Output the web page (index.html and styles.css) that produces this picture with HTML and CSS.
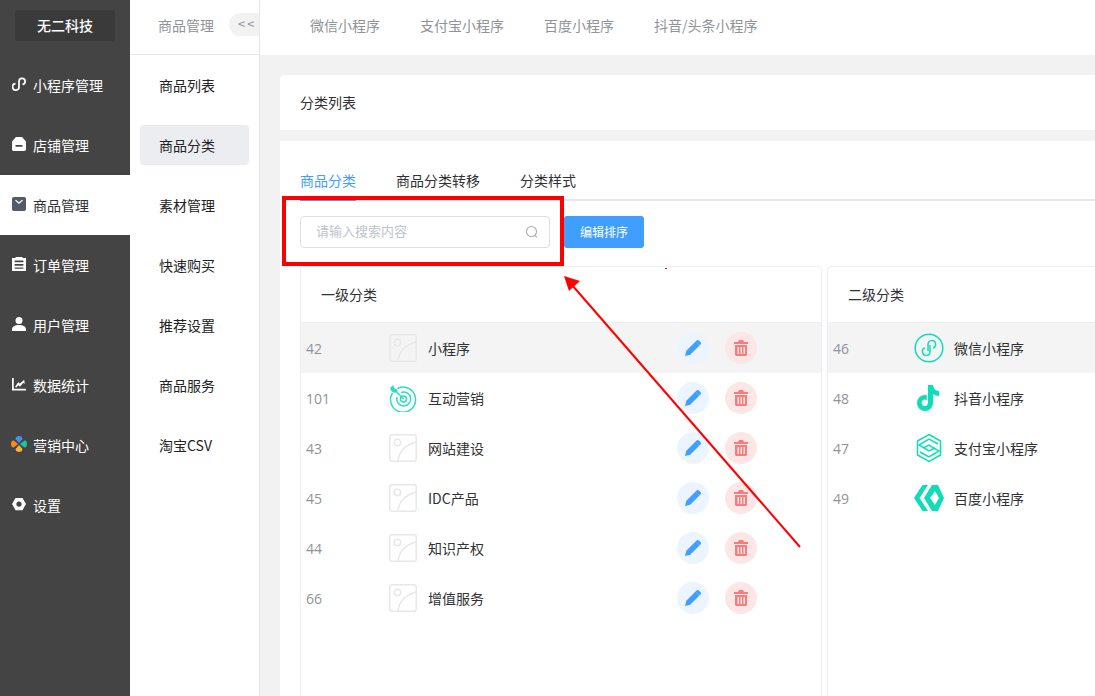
FILE: index.html
```html
<!DOCTYPE html>
<html lang="zh">
  <head>
    <meta charset="UTF-8" />
    <title>商品分类</title>
    <link rel="stylesheet" href="styles.css">
  </head>
  <body>
    <svg class="defs">
      <symbol id="img-empty" viewBox="0 0 28 28">
        <rect x="0.75" y="0.75" width="26.5" height="26.5" rx="2.5" fill="none" stroke="#e8e8e8" stroke-width="1.5"/>
        <circle cx="8.5" cy="8.5" r="3.2" fill="none" stroke="#e8e8e8" stroke-width="1.5"/>
        <path d="M9 27c1-9 7-16 18-19" fill="none" stroke="#e8e8e8" stroke-width="1.5"/>
      </symbol>
      <symbol id="i-pen" viewBox="0 0 16 16">
        <path d="M0 16l1.300-5.200L10.600 1.500l3.900 3.900-9.300 9.300zM11.600.5c.7-.7 1.600-.7 2.200-.1l1.800 1.800c.6.6.6 1.500-.1 2.200l-.9.9-3.900-3.900z" fill="#409eff"/>
      </symbol>
      <symbol id="i-bin" viewBox="0 0 14 16">
        <path d="M5 0h4l1 2h4v2H0V2h4zM1 5h12v9.500c0 .8-.7 1.500-1.500 1.500h-9C1.700 16 1 15.300 1 14.500zm2.500 2v7h1.500V7zm3 0v7h1.500V7zm3 0v7H11V7z" fill="#f87c7c" fill-rule="evenodd"/>
      </symbol>
    </svg>

    <div class="app">
      <aside class="side">
        <div class="logo">无二科技</div>
        <nav>
          <a class="side-item">
            <svg class="side-icon" viewBox="0 0 16 16"><path d="M8 11V5a3.500 3.500 0 1 1 4 3.500M8 11a3.700 3.700 0 1 1-4-3.500" fill="none" stroke="#fff" stroke-width="2"/></svg>
            小程序管理
          </a>
          <a class="side-item">
            <svg class="side-icon" viewBox="0 0 16 16"><path d="M4.500 0h7L16 5v9c0 1-.7 2-2 2H2c-1.300 0-2-1-2-2V5zM4 9v2h8V9z" fill="#fff" fill-rule="evenodd"/></svg>
            店铺管理
          </a>
          <a class="side-item active">
            <svg class="side-icon" viewBox="0 0 16 16"><path d="M2 0h12c1 0 2 1 2 2v12c0 1-1 2-2 2H2c-1 0-2-1-2-2V2c0-1 1-2 2-2zm1.500 4L8 8l4.500-4-1-1L8 6 4.500 3z" fill="#555b66" fill-rule="evenodd"/></svg>
            商品管理
          </a>
          <a class="side-item">
            <svg class="side-icon" viewBox="0 0 16 16"><path d="M0 1h4V0h8v1h4v15H0zm3 3v2h10V4zm0 4v2h10V8zm0 4v1.500h10V12z" fill="#fff" fill-rule="evenodd"/></svg>
            订单管理
          </a>
          <a class="side-item">
            <svg class="side-icon" viewBox="0 0 16 16"><circle cx="8" cy="4" r="4" fill="#fff"/><path d="M0 16v-2c0-3 3-5 8-5s8 2 8 5v2z" fill="#fff"/></svg>
            用户管理
          </a>
          <a class="side-item">
            <svg class="side-icon" viewBox="0 0 16 16"><path d="M0 1h2v12.500h14V15.500H0z" fill="#fff"/><path d="M3.500 11L7 6l2 1.500L14 3l.5 5-1.500-1.500L9 11 7 9.500 5 12z" fill="#fff"/></svg>
            数据统计
          </a>
          <a class="side-item">
            <svg class="side-icon big" viewBox="0 0 16 16"><path d="M8 7L4.700 3.200C4.300 2.500 4.800 0 8 0s3.700 2.500 3.300 3.200z" fill="#4a8df0"/><path d="M7 8l-4 3.300C2 11.800 0 11 0 8s2-3.800 3-3.300z" fill="#f5901e"/><path d="M9 8l4-3.300c1-.5 3 .3 3 3.300s-2 3.800-3 3.300z" fill="#12c9a5"/><path d="M8 9l3.300 3.800c.4.700-.1 3.200-3.300 3.200s-3.700-2.500-3.300-3.200z" fill="#fbb03b"/></svg>
            营销中心
          </a>
          <a class="side-item">
            <svg class="side-icon" viewBox="0 0 16 16"><path d="M4 1h8l4 7-4 7H4L0 8zm4 4a3 3 0 1 0 0 6 3 3 0 0 0 0-6z" fill="#fff" fill-rule="evenodd"/></svg>
            设置
          </a>
        </nav>
      </aside>

      <aside class="sub">
        <div class="sub-head">
          <span>商品管理</span>
          <span class="collapse">&lt;&lt;</span>
        </div>
        <a class="sub-item">商品列表</a>
        <a class="sub-item active">商品分类</a>
        <a class="sub-item">素材管理</a>
        <a class="sub-item">快速购买</a>
        <a class="sub-item">推荐设置</a>
        <a class="sub-item">商品服务</a>
        <a class="sub-item">淘宝CSV</a>
      </aside>

      <main class="main">
        <div class="topbar">
          <a>微信小程序</a>
          <a>支付宝小程序</a>
          <a>百度小程序</a>
          <a>抖音/头条小程序</a>
        </div>
        <div class="content">
          <div class="title-card">分类列表</div>
          <div class="body-card">
            <div class="tabs">
              <a class="tab active">商品分类</a>
              <a class="tab">商品分类转移</a>
              <a class="tab">分类样式</a>
            </div>
            <div class="tools">
              <div class="search">
                <span>请输入搜索内容</span>
                <svg viewBox="0 0 14 14" width="14" height="14"><circle cx="6.500" cy="6.500" r="5" fill="none" stroke="#a8abb2" stroke-width="1.100"/><path d="M10 10.500l1.800 1.800" stroke="#a8abb2" stroke-width="1.100"/></svg>
              </div>
              <button class="btn">编辑排序</button>
            </div>
            <div class="panels">
              <section class="panel first">
                <h4>一级分类</h4>
                <div class="row on">
                  <span class="num">42</span>
                  <svg class="pic"><use href="#img-empty"/></svg>
                  <span class="name">小程序</span>
                  <span class="ops">
                    <i class="op edit"><svg width="16" height="16"><use href="#i-pen"/></svg></i>
                    <i class="op del"><svg width="14" height="16"><use href="#i-bin"/></svg></i>
                  </span>
                </div>
                <div class="row">
                  <span class="num">101</span>
                  <svg class="pic" viewBox="0 0 28 28" fill="none" stroke="#2fdcc0">
                    <path d="M8.500 4.500A12.500 12.500 0 1 1 3.500 9" stroke-width="1.500"/>
                    <path d="M12 8.500A7 7 0 1 1 8 13" stroke-width="1.500"/>
                    <circle cx="14.500" cy="15" r="3" stroke-width="1.500"/>
                    <path d="M4 4l10.500 11" stroke-width="1.500"/>
                    <path d="M1 4l3-3 1.500 3.500L9 6 6 9 2.500 7.500z" fill="#2fdcc0" stroke="none"/>
                  </svg>
                  <span class="name">互动营销</span>
                  <span class="ops">
                    <i class="op edit"><svg width="16" height="16"><use href="#i-pen"/></svg></i>
                    <i class="op del"><svg width="14" height="16"><use href="#i-bin"/></svg></i>
                  </span>
                </div>
                <div class="row">
                  <span class="num">43</span>
                  <svg class="pic"><use href="#img-empty"/></svg>
                  <span class="name">网站建设</span>
                  <span class="ops">
                    <i class="op edit"><svg width="16" height="16"><use href="#i-pen"/></svg></i>
                    <i class="op del"><svg width="14" height="16"><use href="#i-bin"/></svg></i>
                  </span>
                </div>
                <div class="row">
                  <span class="num">45</span>
                  <svg class="pic"><use href="#img-empty"/></svg>
                  <span class="name">IDC产品</span>
                  <span class="ops">
                    <i class="op edit"><svg width="16" height="16"><use href="#i-pen"/></svg></i>
                    <i class="op del"><svg width="14" height="16"><use href="#i-bin"/></svg></i>
                  </span>
                </div>
                <div class="row">
                  <span class="num">44</span>
                  <svg class="pic"><use href="#img-empty"/></svg>
                  <span class="name">知识产权</span>
                  <span class="ops">
                    <i class="op edit"><svg width="16" height="16"><use href="#i-pen"/></svg></i>
                    <i class="op del"><svg width="14" height="16"><use href="#i-bin"/></svg></i>
                  </span>
                </div>
                <div class="row">
                  <span class="num">66</span>
                  <svg class="pic"><use href="#img-empty"/></svg>
                  <span class="name">增值服务</span>
                  <span class="ops">
                    <i class="op edit"><svg width="16" height="16"><use href="#i-pen"/></svg></i>
                    <i class="op del"><svg width="14" height="16"><use href="#i-bin"/></svg></i>
                  </span>
                </div>
              </section>

              <section class="panel second">
                <h4>二级分类</h4>
                <div class="row on">
                  <span class="num">46</span>
                  <svg class="pic big" viewBox="0 0 30 30" fill="none" stroke="#0fdcb8" stroke-width="1.500">
                    <circle cx="15" cy="15" r="13.800"/>
                    <path d="M14 18V11.500a3.800 3.800 0 1 1 5 3.500M16 12v6.500a3.800 3.800 0 1 1-5-3.500"/>
                  </svg>
                  <span class="name">微信小程序</span>
                </div>
                <div class="row">
                  <span class="num">48</span>
                  <svg class="pic big" viewBox="0 0 30 30">
                    <path d="M14 2h5c.3 3.500 2.600 5.700 6 6v5c-2.400 0-4.400-.7-6-1.900V20a8 8 0 1 1-8-8c.6 0 1.200.1 1.800.2v5.100a3.200 3.200 0 1 0 1.200 2.700z" fill="#0fdcb8"/>
                  </svg>
                  <span class="name">抖音小程序</span>
                </div>
                <div class="row">
                  <span class="num">47</span>
                  <svg class="pic big" viewBox="0 0 30 30" fill="none" stroke="#0fdcb8" stroke-width="1.500">
                    <path d="M15 1.500l11.500 6.500v14L15 28.500 3.500 22V8z"/>
                    <path d="M24 11L15 6 5 12l10 6 6-3M6 19l9 5 10-6-10-6-6 3"/>
                  </svg>
                  <span class="name">支付宝小程序</span>
                </div>
                <div class="row">
                  <span class="num">49</span>
                  <svg class="pic big" viewBox="0 0 30 30">
                    <path d="M8.500 2H14L5.500 15 14 28H8.500L0 15z" fill="#0fdcb8"/>
                    <path d="M18 2h6l6 13-6 13h-6L10 15zm3 6l-5 7 5 7 4-7z" fill="#0fdcb8" fill-rule="evenodd"/>
                  </svg>
                  <span class="name">百度小程序</span>
                </div>
              </section>
            </div>
          </div>
        </div>
      </main>
    </div>

    <!-- 标注：红框和箭头 -->
    <div class="mark-box"></div>
    <svg class="mark-arrow" width="1095" height="696" viewBox="0 0 1095 696">
      <path d="M800 547L572 285" stroke="#f00" stroke-width="2" fill="none"/>
      <path d="M564 276l16 5-11 10z" fill="#f00"/>
      <rect x="665" y="268" width="2" height="1" fill="#f00"/>
    </svg>
  </body>
</html>
```

FILE: styles.css
```css
* {
  box-sizing: border-box;
}
html,
body {
  height: 100%;
  margin: 0;
  overflow: hidden;
}
body {
  position: relative;
  font-family: "Noto Sans CJK SC", "Liberation Sans", sans-serif;
  font-size: 14px;
  color: #303133;
  background: #f2f2f3;
}
.defs {
  display: none;
}
.app {
  display: flex;
  height: 696px;
}

/* 左侧主菜单 */
.side {
  width: 130px;
  flex-shrink: 0;
  background: #444;
  padding-top: 10px;
}
.logo {
  width: 100px;
  height: 31px;
  margin: 0 auto 14px;
  background: #3a3a3a;
  border-radius: 3px;
  color: #fff;
  font-weight: 500;
  line-height: 31px;
  text-align: center;
}
.side-item {
  display: flex;
  align-items: center;
  height: 60px;
  padding-left: 12px;
  color: #fff;
}
.side-item.active {
  background: #fff;
  color: #303133;
}
.side-icon {
  width: 14px;
  height: 14px;
  margin-right: 7px;
  margin-top: -2px;
  flex-shrink: 0;
}
.side-icon.big {
  width: 16px;
  height: 16px;
  margin-left: -1px;
  margin-right: 6px;
}

/* 二级菜单 */
.sub {
  width: 130px;
  flex-shrink: 0;
  background: #fff;
  border-right: 1px solid #e6e6e6;
}
.sub-head {
  display: flex;
  align-items: center;
  justify-content: space-between;
  height: 55px;
  padding-left: 28px;
  padding-bottom: 5px;
  border-bottom: 1px solid #e6e6e6;
  color: #909399;
}
.collapse {
  width: 30px;
  height: 23px;
  padding-left: 9px;
  background: #f2f2f2;
  border-radius: 12px 0 0 12px;
  font-size: 13px;
  line-height: 22px;
  letter-spacing: 2px;
  white-space: nowrap;
}
.sub-item {
  display: flex;
  align-items: center;
  height: 40px;
  margin: 10px 10px 20px;
  padding-left: 19px;
  border-radius: 4px;
  color: #222;
}
.sub-item.active {
  background: #ebedf0;
}

/* 内容区 */
.main {
  flex: 1;
  min-width: 0;
}
.topbar {
  display: flex;
  align-items: center;
  gap: 40px;
  height: 55px;
  padding-left: 50px;
  padding-bottom: 5px;
  background: #fff;
  color: #909399;
}
.content {
  padding: 20px 0 0 20px;
}
.title-card {
  height: 55px;
  padding-left: 20px;
  margin-bottom: 11px;
  background: #fff;
  border-radius: 4px 0 0 0;
  line-height: 55px;
}
.body-card {
  height: 560px;
  padding: 20px 0 0 20px;
  background: #fff;
}
.tabs {
  display: flex;
  gap: 40px;
  height: 40px;
  border-bottom: 2px solid #e4e7ed;
}
.tab {
  height: 40px;
  line-height: 38px;
}
.tab.active {
  color: #409eff;
  border-bottom: 2px solid #409eff;
}
.tools {
  display: flex;
  gap: 14px;
  margin-top: 15px;
}
.search {
  display: flex;
  align-items: center;
  justify-content: space-between;
  width: 250px;
  height: 32px;
  padding: 0 10px 0 15px;
  border: 1px solid #dcdfe6;
  border-radius: 4px;
  color: #c0c4cc;
  font-size: 13px;
}
.search span {
  padding-bottom: 3px;
}
.btn {
  width: 80px;
  height: 32px;
  padding: 0 0 2px;
  border: 0;
  border-radius: 3px;
  background: #409eff;
  color: #fff;
  font: inherit;
  font-size: 12px;
}
.panels {
  display: flex;
  gap: 5px;
  margin-top: 18px;
}
.panel {
  height: 440px;
  border: 1px solid #ebeef5;
  border-radius: 4px;
}
.panel.first {
  width: 522px;
  flex-shrink: 0;
}
.panel.second {
  flex: 1;
  border-right: 0;
  border-radius: 4px 0 0 4px;
}
.panel h4 {
  height: 56px;
  margin: 0;
  padding-left: 20px;
  border-bottom: 1px solid #ebeef5;
  font-weight: 400;
  line-height: 54px;
}
.row {
  display: flex;
  align-items: center;
  height: 50px;
  padding-left: 5px;
}
.row.on {
  background: #f4f4f5;
}
.num {
  width: 83px;
  font-family: "Open Sans", sans-serif;
  color: #909399;
}
.pic {
  width: 28px;
  height: 28px;
  margin-right: 11px;
}
.second .num {
  width: 81px;
}
.pic.big {
  width: 30px;
  height: 30px;
  margin-right: 10px;
}
.ops {
  display: flex;
  gap: 16px;
  margin-left: auto;
  margin-right: 64px;
}
.op {
  display: flex;
  align-items: center;
  justify-content: center;
  width: 32px;
  height: 32px;
  border-radius: 50%;
}
.op.edit {
  background: #ecf5ff;
}
.op.del {
  background: #fde6e6;
}

/* 截图上的红色标注 */
.mark-box {
  position: absolute;
  left: 282px;
  top: 196px;
  width: 282px;
  height: 70px;
  border: 4px solid #f00;
}
.mark-arrow {
  position: absolute;
  left: 0;
  top: 0;
  pointer-events: none;
}
```
